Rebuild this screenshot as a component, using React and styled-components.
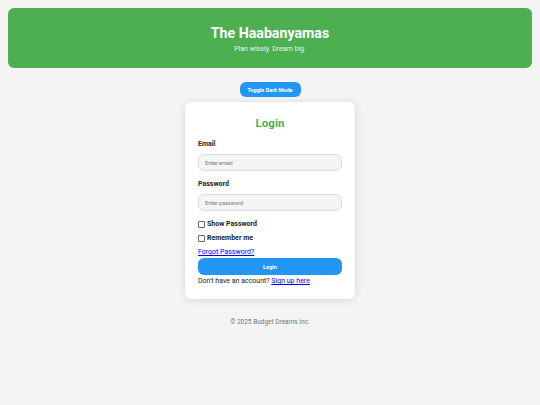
import React from "react";
import styled, { createGlobalStyle } from "styled-components";

const Global = createGlobalStyle`
  html, body { margin: 0; padding: 0; }
  body {
    background: #f4f4f4;
    font-family: Roboto, "Liberation Sans", Arial, sans-serif;
    color: #222;
    padding: 8px;
  }
`;

const Header = styled.header`
  background: #4caf50;
  border-radius: 6px;
  height: 60px;
  box-sizing: border-box;
  padding-top: 16px;
  text-align: center;
  color: #fff;
`;

const Title = styled.h1`
  margin: 0;
  font-size: 14.2px;
  font-weight: 700;
  line-height: 18px;
`;

const Subtitle = styled.p`
  margin: 3px 0 0;
  font-size: 7px;
  line-height: 9px;
  color: #e8f5e9;
`;

const ToggleRow = styled.div`
  display: flex;
  justify-content: center;
  margin-top: 14px;
`;

const ToggleButton = styled.button`
  background: #2196f3;
  color: #fff;
  border: none;
  border-radius: 6px;
  width: 61px;
  height: 15px;
  padding: 0;
  font-family: inherit;
  font-size: 5.5px;
  font-weight: 700;
`;

const Card = styled.div`
  width: 170px;
  box-sizing: border-box;
  margin: 5px auto 0;
  background: #fff;
  border-radius: 6px;
  box-shadow: 0 1px 8px rgba(0, 0, 0, 0.12);
  padding: 14px 13px 13px;
`;

const CardTitle = styled.h2`
  margin: 0;
  text-align: center;
  color: #4caf50;
  font-size: 11.5px;
  line-height: 14px;
  font-weight: 700;
`;

const Label = styled.label`
  display: block;
  font-size: 7px;
  font-weight: 700;
  line-height: 9px;
  margin-top: ${(p) => p.$mt}px;
`;

const Input = styled.input`
  display: block;
  box-sizing: border-box;
  width: 100%;
  height: 17px;
  margin-top: 5px;
  border: 1px solid #dcdcdc;
  border-radius: 6px;
  background: #f5f5f5;
  padding: 0 6px;
  font-family: inherit;
  font-size: 5.5px;
  outline: none;
  &::placeholder { color: #777; }
`;

const CheckRow = styled.label`
  display: flex;
  align-items: center;
  gap: 2px;
  font-size: 7px;
  font-weight: 700;
  line-height: 9px;
  margin-top: ${(p) => p.$mt}px;
`;

const Box = styled.span`
  width: 5px;
  height: 5px;
  border: 0.8px solid #666;
  border-radius: 1px;
  background: #fff;
`;

const Link = styled.a`
  color: #0000ee;
  text-decoration: underline;
  font-size: 7px;
`;

const ForgotRow = styled.div`
  margin-top: 5px;
  font-size: 7px;
  line-height: 9px;
`;

const LoginButton = styled.button`
  display: block;
  width: 100%;
  height: 17px;
  margin-top: 1px;
  background: #2196f3;
  color: #fff;
  border: none;
  border-radius: 6px;
  font-family: inherit;
  font-size: 5.5px;
  font-weight: 700;
`;

const SignupRow = styled.p`
  margin: 2px 0 0;
  font-size: 7px;
  line-height: 9px;
  color: #222;
`;

const Footer = styled.footer`
  text-align: center;
  margin-top: 19px;
  font-size: 6.5px;
  color: #777;
`;

export default function App() {
  return (
    <>
      <Global />
      <Header>
        <Title>The Haabanyamas</Title>
        <Subtitle>Plan wisely. Dream big.</Subtitle>
      </Header>
      <ToggleRow>
        <ToggleButton>Toggle Dark Mode</ToggleButton>
      </ToggleRow>
      <Card>
        <CardTitle>Login</CardTitle>
        <Label $mt={10}>Email</Label>
        <Input placeholder="Enter email" />
        <Label $mt={9}>Password</Label>
        <Input placeholder="Enter password" />
        <CheckRow $mt={9}><Box />Show Password</CheckRow>
        <CheckRow $mt={5}><Box />Remember me</CheckRow>
        <ForgotRow><Link href="#">Forgot Password?</Link></ForgotRow>
        <LoginButton>Login</LoginButton>
        <SignupRow>Don't have an account? <Link href="#">Sign up here</Link></SignupRow>
      </Card>
      <Footer>© 2025 Budget Dreams Inc.</Footer>
    </>
  );
}
